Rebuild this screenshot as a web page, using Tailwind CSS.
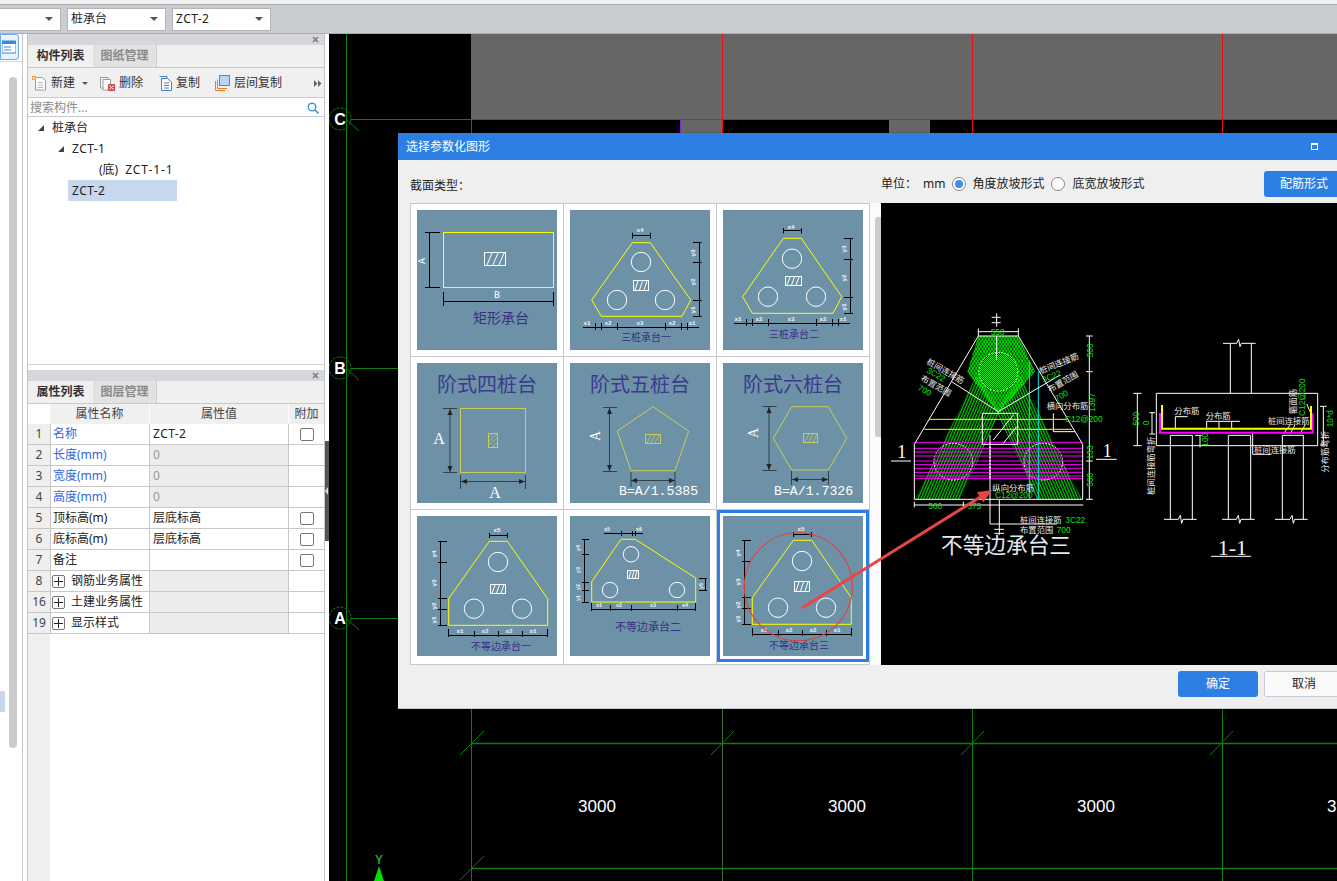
<!DOCTYPE html>
<html lang="zh-CN">
<head>
  <meta charset="UTF-8">
  <title>选择参数化图形</title>
  <script src="https://cdn.jsdelivr.net/npm/@tailwindcss/browser@4"></script>
</head>
<body class="relative w-[1337px] h-[881px] overflow-hidden bg-white text-[12px] text-[#222] font-['Noto_Sans','Noto_Sans_CJK_SC',sans-serif]">

  <!-- top toolbar -->
  <div class="h-[4px] bg-[#f1f1f1]"></div>
  <div class="h-[30px] bg-[#c9cdd2] border-t border-[#a4a8ad] border-b border-b-[#a9adb2] flex items-center gap-[6px] -ml-[40px]">
    <div class="w-[101px] h-[23px] bg-white border border-[#b4b4b4] flex items-center justify-end pr-[7px]"><span class="w-0 h-0 border-x-[4px] border-x-transparent border-t-[4px] border-t-[#555]"></span></div>
    <div class="w-[99px] h-[23px] bg-white border border-[#b4b4b4] flex items-center justify-between pl-[3px] pr-[7px]"><span>桩承台</span><span class="w-0 h-0 border-x-[4px] border-x-transparent border-t-[4px] border-t-[#555]"></span></div>
    <div class="w-[99px] h-[23px] bg-white border border-[#b4b4b4] flex items-center justify-between pl-[3px] pr-[7px]"><span class="tracking-[0.4px]">ZCT-2</span><span class="w-0 h-0 border-x-[4px] border-x-transparent border-t-[4px] border-t-[#555]"></span></div>
  </div>

  <div class="flex h-[847px]">
    <!-- left rail -->
    <div class="w-[22px] relative border-r-0 shrink-0">
      <div class="w-[19px] h-[26px] border border-[#69a9ee] rounded-r-[3px] bg-[#eaf3fd] flex items-center justify-end pr-[2px]">
        <svg width="14" height="14" viewBox="0 0 14 14"><rect x="0" y="1" width="14" height="12" fill="#fff" stroke="#3d87d8"/><rect x="0" y="1" width="14" height="3" fill="#3d87d8"/><path d="M2 7H9M2 10H9" stroke="#3d87d8"/></svg>
      </div>
      <div class="h-px bg-[#d6d8db] mt-[1px]"></div>
      <div class="absolute left-[9px] top-[43px] w-[8px] h-[671px] bg-[#cbcbcb] rounded-[4px]"></div>
      <div class="absolute left-0 top-[657px] w-[5px] h-[21px] bg-[#c7d8ee]"></div>
    </div>
    <div class="w-[5px] shrink-0 border-l border-[#c0c4cc]"></div>

    <!-- property panels -->
    <div class="w-[298px] shrink-0 flex flex-col border-l border-r border-[#c0c4cc]">
      <!-- component list -->
      <div class="h-[331px] flex flex-col border-b border-[#d0d2d6]">
        <div class="h-[11px] bg-[#d5d7db] flex items-center justify-end pr-[5px]"><svg width="7" height="7" viewBox="0 0 7 7"><path d="M1 1L6 6M6 1L1 6" stroke="#777" stroke-width="1.4"/></svg></div>
        <div class="h-[23px] bg-[#f0f0f0] flex border-b border-[#c8cace] font-bold">
          <div class="w-[65px] flex items-center justify-center text-[#333]">构件列表</div>
          <div class="w-[64px] flex items-center justify-center bg-[#e2e2e2] text-[#8a8a8a] border-r border-[#cfcfcf]">图纸管理</div>
        </div>
        <div class="h-[30px] bg-[#f0f0f0] border-b border-[#c8cace] flex items-center relative text-[#333] pt-[1px]">
          <svg class="ml-[4px]" width="15" height="15" viewBox="0 0 15 15"><path d="M3.5 1.5H10L13.5 4.5V14H3.5Z" fill="#fdfdfd" stroke="#9a9a9a"/><path d="M6 6.5H11M6 9H11M6 11.5H11" stroke="#b5b5b5"/><path d="M0 0H4V4H0Z" fill="#f0932b"/><path d="M2 0V4M0 2H4" stroke="#ffd89a"/></svg>
          <span class="ml-[4px]">新建</span>
          <span class="ml-[7px] w-0 h-0 border-x-[3px] border-x-transparent border-t-[3px] border-t-[#555]"></span>
          <svg class="ml-[12px]" width="15" height="15" viewBox="0 0 15 15"><path d="M.5 1.5H8V12H.5Z" fill="#f4f4f4" stroke="#9a9a9a"/><path d="M3 3.5H10.5V14H3Z" fill="#fff" stroke="#9a9a9a"/><rect x="8" y="8" width="7" height="7" fill="#d94a4a"/><path d="M9.5 9.5L13.5 13.5M13.5 9.5L9.5 13.5" stroke="#fff"/></svg>
          <span class="ml-[4px]">删除</span>
          <svg class="ml-[16px]" width="13" height="15" viewBox="0 0 13 15"><path d="M.5.5H8V3" fill="none" stroke="#4a85c9"/><path d="M2.5 2.5H8.5L12.5 6V14.5H2.5Z" fill="#fff" stroke="#3f7fc9"/><path d="M5 7H10M5 9.5H10M5 12H10" stroke="#3f7fc9"/></svg>
          <span class="ml-[4px]">复制</span>
          <svg class="ml-[15px]" width="15" height="16" viewBox="0 0 15 16"><path d="M.5 6V15.5H10M2.5 4.5V13.5H12" fill="none" stroke="#ee7a1f"/><rect x="4.5" y=".5" width="10" height="10" fill="#b8d4f6" stroke="#4c8ad6"/></svg>
          <span class="ml-[4px]">层间复制</span>
          <svg class="absolute right-[2px] top-[12px]" width="8" height="7" viewBox="0 0 8 7"><path d="M0 0L3.5 3.5L0 7ZM4 0L7.5 3.5L4 7Z" fill="#666"/></svg>
        </div>
        <div class="h-[19px] border-b border-[#c8cace] flex items-center justify-between pl-[2px] pr-[5px] pt-[1px] text-[#8b8b8b]">
          <span>搜索构件...</span>
          <svg width="12" height="12" viewBox="0 0 12 12"><circle cx="5" cy="5" r="3.8" fill="none" stroke="#3f94c9" stroke-width="1.4"/><path d="M8 8L11.5 11.5" stroke="#3f94c9" stroke-width="1.6"/></svg>
        </div>
        <div class="flex-1 bg-white text-[#222]">
          <div class="h-[21px] flex items-center pl-[10px]"><span class="w-0 h-0 border-l-[6px] border-l-transparent border-b-[6px] border-b-[#444]"></span><span class="ml-[8px]">桩承台</span></div>
          <div class="h-[21px] flex items-center pl-[30px]"><span class="w-0 h-0 border-l-[6px] border-l-transparent border-b-[6px] border-b-[#444]"></span><span class="ml-[8px] tracking-[0.4px]">ZCT-1</span></div>
          <div class="h-[21px] flex items-center pl-[71px]">(底)<span class="ml-[7px] tracking-[0.9px]">ZCT-1-1</span></div>
          <div class="h-[21px] ml-[40px] w-[109px] flex items-center pl-[4px] bg-[#c7d8ee] tracking-[0.4px]">ZCT-2</div>
        </div>
      </div>
      <div class="h-[5px] bg-white"></div>

      <!-- attribute list -->
      <div class="flex-1 flex flex-col">
        <div class="h-[11px] bg-[#d5d7db] flex items-center justify-end pr-[5px]"><svg width="7" height="7" viewBox="0 0 7 7"><path d="M1 1L6 6M6 1L1 6" stroke="#777" stroke-width="1.4"/></svg></div>
        <div class="h-[23px] bg-[#f0f0f0] flex border-b border-[#c8cace] font-bold">
          <div class="w-[65px] flex items-center justify-center text-[#333]">属性列表</div>
          <div class="w-[64px] flex items-center justify-center bg-[#e2e2e2] text-[#8a8a8a] border-r border-[#cfcfcf]">图层管理</div>
        </div>
        <div class="flex-1 grid grid-cols-[22px_100px_139px_1fr] grid-rows-[20px_repeat(10,21px)_1fr] text-[12px]">
          <div class="bg-white"></div>
          <div class="bg-[#f0f0f0] border-r border-white flex items-center justify-center text-[#444]">属性名称</div>
          <div class="bg-[#f0f0f0] border-r border-white flex items-center justify-center text-[#444]">属性值</div>
          <div class="bg-[#f0f0f0] flex items-center justify-center text-[#444]">附加</div>

          <div class="bg-[#efefef] border-b border-[#c8c8c8] flex items-center justify-center text-[#444]">1</div>
          <div class="border-x border-b border-[#c8c8c8] flex items-center pl-[2px] text-[#3366dd]">名称</div>
          <div class="border-r border-b border-[#c8c8c8] flex items-center pl-[3px] tracking-[0.4px]">ZCT-2</div>
          <div class="border-b border-[#c8c8c8] flex items-center justify-center"><span class="w-[14px] h-[13px] border border-[#777] rounded-[2px]"></span></div>

          <div class="bg-[#efefef] border-b border-[#c8c8c8] flex items-center justify-center text-[#444]">2</div>
          <div class="border-x border-b border-[#c8c8c8] flex items-center pl-[2px] text-[#3366dd]">长度(mm)</div>
          <div class="bg-[#ececec] border-r border-b border-[#c8c8c8] flex items-center pl-[3px] text-[#999]">0</div>
          <div class="border-b border-[#c8c8c8]"></div>

          <div class="bg-[#efefef] border-b border-[#c8c8c8] flex items-center justify-center text-[#444]">3</div>
          <div class="border-x border-b border-[#c8c8c8] flex items-center pl-[2px] text-[#3366dd]">宽度(mm)</div>
          <div class="bg-[#ececec] border-r border-b border-[#c8c8c8] flex items-center pl-[3px] text-[#999]">0</div>
          <div class="border-b border-[#c8c8c8]"></div>

          <div class="bg-[#efefef] border-b border-[#c8c8c8] flex items-center justify-center text-[#444]">4</div>
          <div class="border-x border-b border-[#c8c8c8] flex items-center pl-[2px] text-[#3366dd]">高度(mm)</div>
          <div class="bg-[#ececec] border-r border-b border-[#c8c8c8] flex items-center pl-[3px] text-[#999]">0</div>
          <div class="border-b border-[#c8c8c8]"></div>

          <div class="bg-[#efefef] border-b border-[#c8c8c8] flex items-center justify-center text-[#444]">5</div>
          <div class="border-x border-b border-[#c8c8c8] flex items-center pl-[2px]">顶标高(m)</div>
          <div class="border-r border-b border-[#c8c8c8] flex items-center pl-[3px]">层底标高</div>
          <div class="border-b border-[#c8c8c8] flex items-center justify-center"><span class="w-[14px] h-[13px] border border-[#777] rounded-[2px]"></span></div>

          <div class="bg-[#efefef] border-b border-[#c8c8c8] flex items-center justify-center text-[#444]">6</div>
          <div class="border-x border-b border-[#c8c8c8] flex items-center pl-[2px]">底标高(m)</div>
          <div class="border-r border-b border-[#c8c8c8] flex items-center pl-[3px]">层底标高</div>
          <div class="border-b border-[#c8c8c8] flex items-center justify-center"><span class="w-[14px] h-[13px] border border-[#777] rounded-[2px]"></span></div>

          <div class="bg-[#efefef] border-b border-[#c8c8c8] flex items-center justify-center text-[#444]">7</div>
          <div class="border-x border-b border-[#c8c8c8] flex items-center pl-[2px]">备注</div>
          <div class="border-r border-b border-[#c8c8c8]"></div>
          <div class="border-b border-[#c8c8c8] flex items-center justify-center"><span class="w-[14px] h-[13px] border border-[#777] rounded-[2px]"></span></div>

          <div class="bg-[#efefef] border-b border-[#c8c8c8] flex items-center justify-center text-[#444]">8</div>
          <div class="border-x border-b border-[#c8c8c8] flex items-center pl-[1px]"><span class="w-[13px] h-[13px] border border-[#777] rounded-[2px] flex items-center justify-center mr-[6px]"><svg width="9" height="9" viewBox="0 0 9 9"><path d="M4.5 0V9M0 4.5H9" stroke="#222"/></svg></span>钢筋业务属性</div>
          <div class="bg-[#ececec] border-r border-b border-[#c8c8c8]"></div>
          <div class="border-b border-[#c8c8c8]"></div>

          <div class="bg-[#efefef] border-b border-[#c8c8c8] flex items-center justify-center text-[#444]">16</div>
          <div class="border-x border-b border-[#c8c8c8] flex items-center pl-[1px]"><span class="w-[13px] h-[13px] border border-[#777] rounded-[2px] flex items-center justify-center mr-[6px]"><svg width="9" height="9" viewBox="0 0 9 9"><path d="M4.5 0V9M0 4.5H9" stroke="#222"/></svg></span>土建业务属性</div>
          <div class="bg-[#ececec] border-r border-b border-[#c8c8c8]"></div>
          <div class="border-b border-[#c8c8c8]"></div>

          <div class="bg-[#efefef] border-b border-[#c8c8c8] flex items-center justify-center text-[#444]">19</div>
          <div class="border-x border-b border-[#c8c8c8] flex items-center pl-[1px]"><span class="w-[13px] h-[13px] border border-[#777] rounded-[2px] flex items-center justify-center mr-[6px]"><svg width="9" height="9" viewBox="0 0 9 9"><path d="M4.5 0V9M0 4.5H9" stroke="#222"/></svg></span>显示样式</div>
          <div class="bg-[#ececec] border-r border-b border-[#c8c8c8]"></div>
          <div class="border-b border-[#c8c8c8]"></div>

          <div class="bg-[#efefef]"></div>
          <div class="col-span-3 bg-white"></div>
        </div>
      </div>
    </div>

    <!-- splitter + CAD canvas -->
    <div class="w-[4px] shrink-0 bg-white relative">
      <div class="absolute left-0 top-[407px] w-[4px] h-[100px] bg-[#555] flex items-center"><span class="w-0 h-0 border-y-[4px] border-y-transparent border-r-[3px] border-r-[#ddd]"></span></div>
    </div>
    <div class="flex-1 bg-black relative overflow-hidden">
      <svg class="absolute inset-0" width="1008" height="847" viewBox="329 34 1008 847" font-family="Liberation Sans">
        <rect x="471" y="34" width="866" height="85" fill="#666"/>
        <rect x="680" y="119" width="42" height="20" fill="#666"/>
        <rect x="889" y="119" width="41" height="20" fill="#666"/>
        <path d="M722.5 34V133M972.5 34V133M1222.5 34V133M471 119.5H1337" stroke="#ee1010"/>
        <path d="M680.5 119V133" stroke="#8020e0"/>
        <path d="M346.5 34V881M471.5 119V133M351 119.5H471M351 368.5H398M351 618.5H398" stroke="#0b800b"/>
        <path d="M346 119L359 131M346 368L359 380M346 618L359 630" stroke="#0b800b"/>
        <g fill="none" stroke="#0b800b" stroke-dasharray="3 1"><circle cx="340" cy="119" r="11"/><circle cx="340" cy="368" r="11"/><circle cx="340" cy="618" r="11"/></g>
        <g fill="#fff" font-size="16" font-weight="bold" text-anchor="middle"><text x="340" y="125">C</text><text x="340" y="374">B</text><text x="340" y="624">A</text></g>
        <path d="M471.5 709V881M972.5 709V881M1222.5 709V881" stroke="#0b800b"/>
        <path d="M471 743.5H1337M471 868.5H1337" stroke="#0b800b" stroke-width="1.6"/>
        <path d="M722.5 709V881" stroke="#3b6a3b"/>
        <path d="M460 755L484 731M460 880L484 856M711 755L734 731M961 755L984 731M1210 755L1233 731" stroke="#0b800b"/>
        <g fill="#fff" font-size="17" text-anchor="middle"><text x="597" y="812">3000</text><text x="847" y="812">3000</text><text x="1096" y="812">3000</text><text x="1327" y="812" text-anchor="start">3</text></g>
        <text x="379" y="864" fill="#2bdc2b" font-size="12" text-anchor="middle">Y</text>
        <path d="M379 866L384 881H374Z" fill="#00e000"/>
      </svg>
    </div>
  </div>

  <!-- dialog window -->
  <div class="absolute left-[398px] top-[133px] w-[960px] h-[576px] bg-[#efefef] border-b border-[#c5cad6] flex flex-col shadow-[0_0_2px_rgba(0,0,0,0.3)]">
    <div class="h-[27px] bg-[#2d7fe3] flex items-center justify-between pl-[8px] pr-[40px] text-white text-[12px] shrink-0">
      <span>选择参数化图形</span>
      <span class="w-[7px] h-[7px] border border-white border-t-2"></span>
    </div>
    <div class="h-[43px] relative shrink-0 text-[#222]">
      <span class="absolute left-[12px] top-[17px]">截面类型：</span>
      <div class="absolute left-[483px] top-[15px] flex items-center">
        <span>单位：</span><span class="ml-[6px]">mm</span>
        <span class="ml-[7px] w-[14px] h-[14px] rounded-full border border-[#888] bg-white flex items-center justify-center"><span class="w-[8px] h-[8px] rounded-full bg-[#3d8ff0]"></span></span>
        <span class="ml-[6px]">角度放坡形式</span>
        <span class="ml-[7px] w-[14px] h-[14px] rounded-full border border-[#888] bg-white"></span>
        <span class="ml-[7px]">底宽放坡形式</span>
      </div>
      <div class="absolute left-[866px] top-[11px] w-[90px] h-[26px] bg-[#2d7fe3] rounded-[3px] text-white flex items-center pl-[16px]">配筋形式</div>
    </div>

    <div class="h-[462px] flex shrink-0 pl-[12px]">
      <!-- section type cards -->
      <div class="w-[471px] bg-[#fbfbfb] shrink-0 relative">
        <div class="w-[460px] grid grid-cols-[153px_153px_153px] grid-rows-[153px_153px_155px] border-l border-t border-[#c8c8c8] bg-white">

          <div class="border-r border-b border-[#c8c8c8] pl-[6px] pt-[6px]">
            <svg width="140" height="140" viewBox="0 0 140 140" class="bg-[#6d92a8]" font-family="Liberation Mono" fill="none">
              <rect x="26.5" y="22.5" width="110" height="55" stroke="#ff0"/>
              <rect x="67.5" y="42.5" width="21" height="13" stroke="#fff"/><path d="M70 55L75 43M76 55L81 43M82 55L87 43" stroke="#fff"/>
              <path d="M12.5 22.5V77M8 22.5H23M8 77.5H23M26.5 82V96M136.5 82V96M26.5 91.5H136.5" stroke="#000"/>
              <text transform="translate(8 54) rotate(-90)" fill="#fff" font-size="10">A</text>
              <text x="77" y="88" fill="#fff" font-size="10">B</text>
              <text x="84" y="113" text-anchor="middle" fill="#3a2f86" font-size="14" font-family="Noto Sans CJK SC">矩形承台</text>
            </svg>
          </div>

          <div class="border-r border-b border-[#c8c8c8] pl-[6px] pt-[6px]">
            <svg width="140" height="140" viewBox="0 0 140 140" class="bg-[#6d92a8]" font-family="Liberation Mono" fill="none">
              <path d="M62.3 32.7H80.3L120.7 90L112 106.3H31.3L21.7 90Z" stroke="#ff0"/>
              <g stroke="#fff"><circle cx="71" cy="52" r="9.7"/><circle cx="47" cy="90" r="9.7"/><circle cx="95" cy="90" r="9.7"/><rect x="63.5" y="70.5" width="15" height="10"/><path d="M65 80L68 71M69.5 80L72.5 71M74 80L77 71"/></g>
              <path d="M62.3 25.5H80.3M62.5 22.7V28.7M80.5 22.7V28.7M129.5 32.7V106.3M123 32.5H131.7M123 52.5H131.7M123 90.5H131.7M123 106.5H131.7M13 117.5H129M25.5 113V120M31.5 113V120M47.5 113V120M95.5 113V120M111.5 113V120M117.5 113V120" stroke="#000"/>
              <g fill="#f1f5f8" font-size="6" font-weight="bold" text-anchor="middle"><text x="70" y="22">x4</text><text x="17" y="115">x1</text><text x="38" y="115">x2</text><text x="70" y="115">x3</text><text x="102" y="115">x2</text><text x="122" y="115">x1</text><text transform="translate(125 43) rotate(-90)">y3</text><text transform="translate(125 72) rotate(-90)">y2</text><text transform="translate(125 100) rotate(-90)">y1</text></g>
              <text x="76" y="131" text-anchor="middle" fill="#3a2f86" font-size="10" font-family="Noto Sans CJK SC">三桩承台一</text>
            </svg>
          </div>

          <div class="border-r border-b border-[#c8c8c8] pl-[6px] pt-[6px]">
            <svg width="140" height="140" viewBox="0 0 140 140" class="bg-[#6d92a8]" font-family="Liberation Mono" fill="none">
              <path d="M60.3 28.3H78.3L118.7 86.7L110 103.3H29.3L19.7 86.7Z" stroke="#ff0"/>
              <g stroke="#fff"><circle cx="69" cy="48.7" r="9.7"/><circle cx="45" cy="86.7" r="9.7"/><circle cx="93" cy="86.7" r="9.7"/><rect x="62.5" y="66.5" width="16" height="9"/><path d="M64 75L67 67M68.5 75L71.5 67M73 75L76 67"/></g>
              <path d="M60.3 20.5H78.3M60.5 18V23.5M78.5 18V23.5M127.5 28.3V103.3M121 28.5H130M121 49.5H130M121 87.5H130M121 103.5H130M11 113.5H127M23.5 109V116M29.5 109V116M45.5 109V116M93.5 109V116M109.5 109V116M115.5 109V116" stroke="#000"/>
              <g fill="#f1f5f8" font-size="6" font-weight="bold" text-anchor="middle"><text x="68" y="19">x4</text><text x="15" y="111">x1</text><text x="36" y="111">x2</text><text x="68" y="111">x3</text><text x="100" y="111">x2</text><text x="120" y="111">x1</text><text transform="translate(123 39) rotate(-90)">y3</text><text transform="translate(123 68) rotate(-90)">y2</text><text transform="translate(123 97) rotate(-90)">y1</text></g>
              <text x="71" y="128" text-anchor="middle" fill="#3a2f86" font-size="10" font-family="Noto Sans CJK SC">三桩承台二</text>
            </svg>
          </div>

          <div class="border-r border-b border-[#c8c8c8] pl-[6px] pt-[6px]">
            <svg width="140" height="140" viewBox="0 0 140 140" class="bg-[#6d92a8]" font-family="Liberation Serif" fill="none">
              <text x="70" y="29" text-anchor="middle" fill="#3b3a8c" font-size="20" font-family="Noto Sans CJK SC">阶式四桩台</text>
              <rect x="43.5" y="45.5" width="65" height="64" stroke="#c9cc55"/>
              <rect x="71.5" y="70.5" width="9" height="14" stroke="#c9cc55"/><path d="M72 74L77 70M72 78L80 71M72 82L80 75M75 84L80 80" stroke="#c9cc55" stroke-width=".7"/>
              <path d="M33 46V109M26 45.5H40M26 109.5H40M43.5 112V126M108.5 112V126M44 118.5H108" stroke="#30414c"/>
              <path d="M33 46L30.5 52H35.5ZM33 109L30.5 103H35.5ZM44 118.5L50 116V121ZM108 118.5L102 116V121Z" fill="#222"/>
              <text x="22" y="81" text-anchor="middle" fill="#fff" font-size="16">A</text>
              <text x="78" y="135" text-anchor="middle" fill="#fff" font-size="16">A</text>
            </svg>
          </div>

          <div class="border-r border-b border-[#c8c8c8] pl-[6px] pt-[6px]">
            <svg width="140" height="140" viewBox="0 0 140 140" class="bg-[#6d92a8]" font-family="Liberation Mono" fill="none">
              <text x="70" y="29" text-anchor="middle" fill="#3b3a8c" font-size="20" font-family="Noto Sans CJK SC">阶式五桩台</text>
              <path d="M83 43.7L118.7 68L105 107.7H61L47.3 68Z" stroke="#c9cc55"/>
              <rect x="75.5" y="71.5" width="15" height="9" stroke="#c9cc55"/><path d="M77 80L81 72M81 80L85 72M85 80L89 72" stroke="#c9cc55" stroke-width=".8"/>
              <path d="M39.5 45V108M33 44.5H47M33 108.5H47M61 109V124M105 109V124M61 117.5H105" stroke="#30414c"/>
              <path d="M39.5 45L37 51H42ZM39.5 108L37 102H42ZM61 117.5L67 115V120ZM105 117.5L99 115V120Z" fill="#222"/>
              <text transform="translate(30 78) rotate(-90)" fill="#fff" font-size="14" font-family="Liberation Serif">A</text>
              <text x="49" y="132" fill="#fff" font-size="13.2">B=A/1.5385</text>
            </svg>
          </div>

          <div class="border-r border-b border-[#c8c8c8] pl-[6px] pt-[6px]">
            <svg width="140" height="140" viewBox="0 0 140 140" class="bg-[#6d92a8]" font-family="Liberation Mono" fill="none">
              <text x="70" y="29" text-anchor="middle" fill="#3b3a8c" font-size="20" font-family="Noto Sans CJK SC">阶式六桩台</text>
              <path d="M68.7 43.7H105.3L123.7 75.3L105.3 107H68.7L50.3 75.3Z" stroke="#c9cc55"/>
              <rect x="80.5" y="70.5" width="14" height="9" stroke="#c9cc55"/><path d="M82 79L86 71M86 79L90 71M90 79L94 71" stroke="#c9cc55" stroke-width=".8"/>
              <path d="M46 44V107M39.7 43.5H53.7M39.7 107.5H53.7M68.5 108V122M105.5 108V122M69 116.5H105" stroke="#30414c"/>
              <path d="M46 44L43.5 50H48.5ZM46 107L43.5 101H48.5ZM69 116.5L75 114V119ZM105 116.5L99 114V119Z" fill="#222"/>
              <text transform="translate(35 75) rotate(-90)" fill="#fff" font-size="14" font-family="Liberation Serif">A</text>
              <text x="51" y="132" fill="#fff" font-size="13.2">B=A/1.7326</text>
            </svg>
          </div>

          <div class="border-r border-b border-[#c8c8c8] pl-[6px] pt-[6px]">
            <svg width="140" height="140" viewBox="0 0 140 140" class="bg-[#6d92a8]" font-family="Liberation Mono" fill="none">
              <path d="M72.3 25.3H90.3L130.7 82.7V109.3H31.7V82.7Z" stroke="#ff0"/>
              <g stroke="#fff"><circle cx="81" cy="46" r="9.7"/><circle cx="57" cy="92.7" r="9.7"/><circle cx="105" cy="92.7" r="9.7"/><rect x="73.5" y="68.5" width="15" height="9"/><path d="M75 77L78 69M79.5 77L82.5 69M84 77L87 69"/></g>
              <path d="M72.3 19.5H90.3M72.5 17V22M90.5 17V22M23.5 25.3V109.3M21 25.5H30M21 46.5H30M21 82.5H30M21 93.5H30M21 109.5H30M31.7 119.5H130.7M31.5 113V121M57.5 115V121M81.5 115V121M105.5 115V121M130.5 113V121" stroke="#000"/>
              <g fill="#f1f5f8" font-size="6" font-weight="bold" text-anchor="middle"><text x="80" y="16">x5</text><text x="43" y="117">x1</text><text x="68" y="117">x2</text><text x="92" y="117">x2</text><text x="116" y="117">x1</text><text transform="translate(19 38) rotate(-90)">y4</text><text transform="translate(19 67) rotate(-90)">y3</text><text transform="translate(19 90) rotate(-90)">y2</text><text transform="translate(19 104) rotate(-90)">y1</text></g>
              <text x="84" y="133.5" text-anchor="middle" fill="#3a2f86" font-size="10" font-family="Noto Sans CJK SC">不等边承台一</text>
            </svg>
          </div>

          <div class="border-r border-b border-[#c8c8c8] pl-[6px] pt-[6px]">
            <svg width="140" height="140" viewBox="0 0 140 140" class="bg-[#6d92a8]" font-family="Liberation Mono" fill="none">
              <path d="M51 23.3H65.3L125.7 62V86H21.7V65.7Z" stroke="#ff0"/>
              <g stroke="#fff"><circle cx="61" cy="38.3" r="7.7"/><circle cx="40" cy="74" r="7.7"/><circle cx="107" cy="74" r="7.7"/><rect x="57.5" y="54.5" width="11" height="8"/><path d="M59 62L61 55M62 62L64 55M65 62L67 55"/></g>
              <path d="M34 17.5H73M51.5 15V20M62.5 15V20M65.5 15V20M14.5 23.3V86M12 23.5H19M12 38.5H19M12 66.5H19M12 74.5H19M12 86.5H19M135.5 62V75M129 62.5H137M129 74.5H137M21.7 93.5H125.7M21.5 87V95M40.5 89V95M61.5 89V95M107.5 89V95M125.5 87V95" stroke="#000"/>
              <g fill="#f1f5f8" font-size="5" font-weight="bold" text-anchor="middle"><text x="37" y="15">x5</text><text x="69" y="15">x6</text><text x="29" y="91">x1</text><text x="49" y="91">x2</text><text x="83" y="91">x3</text><text x="115" y="91">x4</text><text transform="translate(10 32) rotate(-90)">y4</text><text transform="translate(10 54) rotate(-90)">y3</text><text transform="translate(10 71) rotate(-90)">y2</text><text transform="translate(10 82) rotate(-90)">y1</text><text transform="translate(133 70) rotate(-90)">y5</text></g>
              <text x="78" y="115" text-anchor="middle" fill="#3a2f86" font-size="11" font-family="Noto Sans CJK SC">不等边承台二</text>
            </svg>
          </div>

          <div class="relative border-r border-b border-[#c8c8c8] pl-[6px] pt-[6px]">
            <svg width="140" height="140" viewBox="0 0 140 140" class="bg-[#6d92a8]" font-family="Liberation Mono" fill="none">
              <path d="M70.3 24.3H88.7L128.3 81.7V108.3H29.3V81.7Z" stroke="#ff0"/>
              <g stroke="#fff"><circle cx="79" cy="45" r="9.7"/><circle cx="55" cy="91.7" r="9.7"/><circle cx="103" cy="91.7" r="9.7"/><rect x="71.5" y="65.5" width="15" height="10"/><path d="M73 75L76 66M77.5 75L80.5 66M82 75L85 66"/></g>
              <path d="M70.3 18.5H88.3M70.5 16V21M88.5 16V21M21.5 24.3V108.3M19 24.5H28M19 45.5H28M19 81.5H28M19 92.5H28M19 108.5H28M29.3 118.5H128.3M29.5 112V120M55.5 114V120M79.5 114V120M103.5 114V120M128.5 112V120" stroke="#000"/>
              <g fill="#f1f5f8" font-size="6" font-weight="bold" text-anchor="middle"><text x="78" y="15">x5</text><text x="41" y="116">x1</text><text x="66" y="116">x2</text><text x="90" y="116">x2</text><text x="114" y="116">x1</text><text transform="translate(17 37) rotate(-90)">y4</text><text transform="translate(17 66) rotate(-90)">y3</text><text transform="translate(17 89) rotate(-90)">y2</text><text transform="translate(17 103) rotate(-90)">y1</text></g>
              <text x="76" y="132.5" text-anchor="middle" fill="#3a2f86" font-size="10" font-family="Noto Sans CJK SC">不等边承台三</text>
            </svg>
            <div class="absolute left-0 top-0 w-[152px] h-[152px] border-[3px] border-[#2d7fe3]"></div>
          </div>
        </div>
        <div class="absolute left-[465px] top-[14px] w-[6px] h-[220px] bg-[#cbcbcb] rounded-l-[3px]"></div>
      </div>

      <!-- large preview -->
      <div class="w-[456px] h-[462px] bg-black shrink-0 overflow-hidden">
        <svg width="456" height="462" viewBox="881 203 456 462">
          <defs>
            <pattern id="bandL" width="8" height="8" patternUnits="userSpaceOnUse" patternTransform="rotate(23)"><path d="M2 0V8" stroke="#00ff00" stroke-width="3"/></pattern>
            <pattern id="bandR" width="8" height="8" patternUnits="userSpaceOnUse" patternTransform="rotate(-23)"><path d="M2 0V8" stroke="#00ff00" stroke-width="3"/></pattern>
            <pattern id="fanL" width="8" height="8" patternUnits="userSpaceOnUse" patternTransform="rotate(33)"><path d="M2 0V8" stroke="#00ff00" stroke-width="3"/></pattern>
            <pattern id="fanR" width="8" height="8" patternUnits="userSpaceOnUse" patternTransform="rotate(-33)"><path d="M2 0V8" stroke="#00ff00" stroke-width="3"/></pattern>
            <pattern id="cross" width="6" height="6" patternUnits="userSpaceOnUse"><path d="M0 0H3V3H0ZM3 3H6V6H3Z" fill="#00ff00"/></pattern>
          </defs>

          <!-- plan view, drawn at 3x -->
          <svg x="880" y="300" width="240" height="270" viewBox="0 0 720 810" overflow="visible" font-family="Noto Sans CJK SC" fill="none">
            <path d="M295 108L415 108L465 215L355 340L262 215Z" fill="url(#fanL)"/>
            <path d="M295 108L415 108L465 215L355 340L262 215Z" fill="url(#fanR)"/>
            <path d="M105 598L240 598L360 335L290 225Z" fill="url(#bandL)"/>
            <path d="M605 598L470 598L350 335L420 225Z" fill="url(#bandR)"/>
            <circle cx="355" cy="215" r="58" fill="#000"/>
            <circle cx="355" cy="215" r="58" fill="url(#cross)" stroke="#fff" stroke-width="3" stroke-dasharray="6 4"/>
            <ellipse cx="220" cy="485" rx="58" ry="55" stroke="#fff" stroke-width="3" stroke-dasharray="6 4"/>
            <ellipse cx="490" cy="485" rx="58" ry="55" stroke="#fff" stroke-width="3" stroke-dasharray="6 4"/>
            <g stroke="#ff00ff" stroke-width="3"><path d="M103 427H608M103 445H608M103 456H608M103 468H608M103 483H608M103 494H608M103 505H608M103 517H608M103 528H608M103 536H608"/></g>
            <path d="M148 358H560M133 388H575" stroke="#ffff00" stroke-width="3"/>
            <path d="M448 185V598M475 215V598" stroke="#00e6e6" stroke-width="3"/>
            <path d="M295 108H415L608 433V598H103V433ZM307 340H413V433H307ZM295 95H415M295 85V108M415 85V108M350 108V180M350 40V80M335 52H362M335 68H362M358 672V705M343 688H372M343 700H372M330 405V672H530M358 600V672M340 420L400 345M370 430L410 380M215 245L355 335L540 225M520 340V395H585M103 615H610M103 605V622M250 605V622M628 108V598M618 108H638M618 215H638M618 483H638M618 598H638M33 483H93M648 478H710" stroke="#fff" stroke-width="3"/>
            <path d="M330 430V540" stroke="#fff" stroke-width="5" stroke-dasharray="4 6"/>
            <g fill="#fff" font-family="Liberation Serif" font-size="54" text-anchor="middle"><text x="65" y="475">1</text><text x="682" y="472">1</text></g>
            <g fill="#eaeaea" font-size="25">
              <text transform="translate(138 190) rotate(30)">桩间连接筋</text>
              <text transform="translate(120 240) rotate(30)">布置范围</text>
              <text transform="translate(482 222) rotate(-22)">桩间连接筋</text>
              <text transform="translate(510 278) rotate(-30)">布置范围</text>
              <text x="500" y="328">横向分布筋</text>
              <text x="337" y="572">纵向分布筋</text>
              <text x="420" y="668">桩间连接筋</text>
              <text x="420" y="698">布置范围</text>
            </g>
            <g fill="#13e013" font-family="Liberation Sans" font-size="25">
              <text x="332" y="104">550</text>
              <text transform="translate(138 216) rotate(30)">3C22</text>
              <text transform="translate(112 268) rotate(30)">700</text>
              <text transform="translate(490 248) rotate(-22)">3C22</text>
              <text transform="translate(530 305) rotate(-30)">700</text>
              <text x="555" y="366">C12@200</text>
              <text x="345" y="595">C12@200</text>
              <text x="556" y="668">3C22</text>
              <text x="530" y="698">700</text>
              <text x="145" y="628">500</text>
              <text x="262" y="628">375</text>
              <text transform="translate(640 172) rotate(-90)">500</text>
              <text transform="translate(644 335) rotate(-90)">1397</text>
              <text transform="translate(640 478) rotate(-90)">133</text>
              <text transform="translate(640 560) rotate(-90)">500</text>
            </g>
            <text x="378" y="760" text-anchor="middle" fill="#e2e9f2" font-size="65">不等边承台三</text>
          </svg>

          <!-- section 1-1, drawn at 3x -->
          <svg x="1110" y="330" width="227" height="240" viewBox="0 0 681 720" overflow="visible" font-family="Noto Sans CJK SC" fill="none">
            <path d="M139 190H623V347H139ZM361 40V190M424 40V190M339 40H380L386 28L390 50L394 40H437M181 316V568M247 316V568M355 316V568M422 316V568M517 316V568M580 316V568M181 316H247M355 316H422M517 316H580M162 568H205L211 556L215 580L219 568H260M336 568H379L385 556L389 580L393 568H434M495 568H540L546 556L550 580L554 568H593M70 190H95M70 347H95M82 190V347M118 248H135M118 312H135M126 248V312M255 316H275M270 316V352M630 229H650M630 345H650M640 229V345M196 300V260H233M290 300V274H390M327 274V300M365 274V300M428 305V373H484M520 312L540 285M540 312L555 285M570 312L585 285M590 222L605 255M303 679H423" stroke="#fff" stroke-width="3"/>
            <path d="M150 250V308H608V250" stroke="#ff00ff" stroke-width="6"/>
            <path d="M156 225V296H603V228" stroke="#ffff00" stroke-width="6"/>
            <g fill="#eaeaea" font-size="25">
              <text x="193" y="253">分布筋</text>
              <text x="287" y="268">分布筋</text>
              <text x="474" y="283">桩间连接筋</text>
              <text x="432" y="369">桩间连接筋</text>
              <text transform="translate(558 252) rotate(-90)">箍面筋</text>
              <text transform="translate(655 428) rotate(-90)">分布筋弯折</text>
              <text transform="translate(132 495) rotate(-90)">桩间连接筋弯折</text>
            </g>
            <g fill="#13e013" font-family="Liberation Sans" font-size="25">
              <text transform="translate(86 287) rotate(-90)">500</text>
              <text transform="translate(117 286) rotate(-90)">0</text>
              <text transform="translate(294 350) rotate(-90)">100</text>
              <text transform="translate(586 258) rotate(-90)">C12@200</text>
              <text transform="translate(670 292) rotate(-90)">10*d</text>
            </g>
            <text x="367" y="675" text-anchor="middle" fill="#eef2f6" font-family="Liberation Serif" font-size="66">1-1</text>
          </svg>
        </svg>
      </div>
    </div>

    <div class="flex-1 relative">
      <div class="absolute left-[780px] top-[6px] w-[80px] h-[26px] bg-[#2d7fe3] rounded-[3px] text-white flex items-center justify-center">确定</div>
      <div class="absolute left-[866px] top-[6px] w-[90px] h-[26px] bg-[#fafafa] border border-[#c5cad6] rounded-[3px] flex items-center pl-[27px]">取消</div>
    </div>
  </div>

  <!-- red markup on top of the screenshot -->
  <svg class="absolute inset-0 pointer-events-none" width="1337" height="881" fill="none">
    <circle cx="798.3" cy="586.7" r="54" stroke="#e04040" stroke-width="1.1"/>
    <path d="M802 608L982 496" stroke="#ea4545" stroke-width="3"/>
    <path d="M992 490L983.3 502.5L976.9 492.3Z" fill="#ea4545"/>
  </svg>
</body>
</html>
